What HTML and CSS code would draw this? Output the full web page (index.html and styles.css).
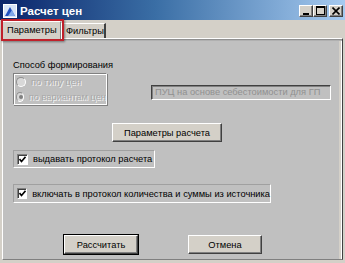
FILE: index.html
```html
<!DOCTYPE html>
<html lang="ru">
  <head>
    <meta charset="UTF-8" />
    <title>Расчет цен</title>
    <link rel="stylesheet" href="styles.css">
  </head>
  <body>
    <div class="window">
      <!-- заголовок окна -->
      <div class="titlebar">
        <svg class="app-icon" width="14" height="14" viewBox="0 0 14 14">
          <rect x="0.5" y="0.5" width="13" height="13" fill="#d8e4f8" stroke="#ffffff" />
          <path d="M2 12 L7 3 L12 12 Z" fill="#2050c0" />
          <path d="M5 12 L9 6 L12 12 Z" fill="#80a8e8" />
        </svg>
        <span class="title">Расчет цен</span>
        <div class="caption-buttons">
          <span class="cap-btn">
            <svg width="8" height="8" viewBox="0 0 8 8"><rect x="1" y="6" width="6" height="2" fill="#000" /></svg>
          </span>
          <span class="cap-btn">
            <svg width="9" height="9" viewBox="0 0 9 9"><rect x="0.5" y="0.5" width="8" height="8" fill="none" stroke="#000" /><rect x="0" y="0" width="9" height="2" fill="#000" /></svg>
          </span>
          <span class="cap-btn close">
            <svg width="8" height="8" viewBox="0 0 8 8"><path d="M0.5 0.5 L7.5 7.5 M7.5 0.5 L0.5 7.5" stroke="#000" stroke-width="1.6" /></svg>
          </span>
        </div>
      </div>

      <!-- вкладки -->
      <div class="tabs">
        <div class="tab active">Параметры</div>
        <div class="tab">Фильтры</div>
      </div>

      <div class="panel">
        <div class="group-title">Способ формирования</div>
        <div class="method-row">
          <div class="radio-group">
            <div class="radio disabled"><span class="radio-dot"></span>по типу цен</div>
            <div class="radio disabled checked"><span class="radio-dot"></span>по вариантам цен</div>
          </div>
          <div class="text-field">ПУЦ на основе себестоимости для ГП</div>
        </div>

        <div class="center-row">
          <button class="btn wide">Параметры расчета</button>
        </div>

        <div class="check-frame first">
          <span class="check">
            <svg width="7" height="7" viewBox="0 0 7 7"><path d="M0.5 3 L2.5 5.5 L6.5 0.8" fill="none" stroke="#000" stroke-width="1.6" /></svg>
          </span>
          выдавать протокол расчета
        </div>
        <div class="check-frame second">
          <span class="check">
            <svg width="7" height="7" viewBox="0 0 7 7"><path d="M0.5 3 L2.5 5.5 L6.5 0.8" fill="none" stroke="#000" stroke-width="1.6" /></svg>
          </span>
          включать в протокол количества и суммы из источника
        </div>

        <div class="footer">
          <button class="btn default">Рассчитать</button>
          <button class="btn">Отмена</button>
        </div>
      </div>

      <!-- красная рамка вокруг вкладки -->
      <div class="highlight"></div>
    </div>
  </body>
</html>
```

FILE: styles.css
```css
* {
  margin: 0;
  padding: 0;
  box-sizing: border-box;
}
body {
  width: 345px;
  height: 263px;
  overflow: hidden;
  background: #d4d0c8;
  font-family: "Liberation Sans", Arial, sans-serif;
  font-size: 9.3px;
  color: #000;
}
.window {
  position: relative;
  width: 345px;
  height: 263px;
  background: #d4d0c8;
}

.titlebar {
  display: flex;
  align-items: center;
  height: 20px;
  padding: 1px 2px 0 3px;
  background: linear-gradient(to right, #0a246a 0%, #3a6ea5 45%, #a6caf0 100%);
}
.app-icon {
  flex: none;
}
.title {
  margin-left: 3px;
  color: #fff;
  font-weight: bold;
  font-size: 11.5px;
}
.caption-buttons {
  display: flex;
  margin-left: auto;
}
.cap-btn {
  display: flex;
  align-items: center;
  justify-content: center;
  width: 14px;
  height: 12px;
  background: #d4d0c8;
  border: 1px solid;
  border-color: #fff #404040 #404040 #fff;
  box-shadow: inset -1px -1px 0 #808080;
}
.cap-btn.close {
  margin-left: 2px;
}

.tabs {
  display: flex;
  align-items: flex-end;
  height: 18px;
  padding-left: 2px;
}
.tab {
  width: 45px;
  height: 15px;
  padding-left: 4px;
  line-height: 14px;
  border-top: 1px solid #fff;
  border-left: 1px solid #fff;
  border-right: 2px solid #404040;
}
.tab.active {
  position: relative;
  z-index: 1;
  width: 59px;
  height: 19px;
  margin-bottom: -2px;
  padding-left: 4px;
  line-height: 16px;
  background: #d4d0c8;
  border-right: 1px solid #808080;
}

.panel {
  height: 222px;
  margin: 0 2px 0 2px;
  padding: 0 10px;
  background: #c0c0c0;
  border: 1px solid;
  border-color: #fff #404040 #808080 #fff;
  box-shadow: inset 0 1px 0 #909090, inset 0 2px 0 #b0b0b0, inset -1px 0 0 #fff, inset -3px 0 0 #d4d0c8;
}
.group-title {
  padding-top: 20px;
  line-height: 13px;
}
.method-row {
  display: flex;
  align-items: flex-end;
  margin-top: 1px;
}
.radio-group {
  width: 94px;
  height: 32px;
  padding: 0 0 0 2px;
  border: 1px solid;
  border-color: #808080 #fff #fff #808080;
  box-shadow: inset 1px 1px 0 #fff, 1px 1px 0 #808080;
}
.radio {
  display: flex;
  align-items: center;
  height: 15px;
  white-space: nowrap;
}
.radio.disabled {
  color: #a8a8a8;
  text-shadow: 1px 1px 0 #f4f4f4;
}
.radio-dot {
  position: relative;
  width: 10px;
  height: 10px;
  margin-right: 5px;
  border-radius: 50%;
  background: #d8d8d8;
  border: 1px solid;
  border-color: #909090 #fff #fff #909090;
}
.radio.checked .radio-dot::after {
  content: "";
  position: absolute;
  left: 2px;
  top: 2px;
  width: 4px;
  height: 4px;
  border-radius: 50%;
  background: #808080;
}
.text-field {
  width: 180px;
  height: 15px;
  margin: 0 0 5px 44px;
  padding-left: 3px;
  line-height: 12px;
  color: #909090;
  white-space: nowrap;
  overflow: hidden;
  background: #c0c0c0;
  border: 1px solid;
  border-color: #404040 #fff #fff #404040;
  box-shadow: inset 1px 1px 0 #808080;
}

.center-row {
  display: flex;
  padding-left: 99px;
  margin-top: 18px;
}
.btn {
  height: 19px;
  font-family: "Liberation Sans", Arial, sans-serif;
  font-size: 9.3px;
  color: #000;
  background: #d4d0c8;
  border: 1px solid;
  border-color: #fff #404040 #404040 #fff;
  box-shadow: inset -1px -1px 0 #808080;
}
.btn.wide {
  width: 110px;
}
.btn.default {
  outline: 1px solid #000;
}

.check-frame {
  display: flex;
  align-items: center;
  height: 18px;
  padding-left: 3px;
  white-space: nowrap;
  border: 1px solid;
  border-color: #a0a0a0 #fff #fff #a0a0a0;
}
.check-frame.first {
  width: 142px;
  margin-top: 8px;
}
.check-frame.second {
  width: 258px;
  height: 19px;
  margin-top: 16px;
}
.check {
  display: flex;
  align-items: center;
  justify-content: center;
  width: 11px;
  height: 11px;
  margin-right: 5px;
  background: #fff;
  border: 1px solid;
  border-color: #808080 #fff #fff #808080;
  box-shadow: inset 1px 1px 0 #404040;
}

.footer {
  display: flex;
  gap: 50px;
  padding-left: 51px;
  margin-top: 32px;
}
.footer .btn {
  width: 74px;
}

.highlight {
  position: absolute;
  left: 1px;
  top: 19px;
  width: 63px;
  height: 22px;
  border: 2px solid #c0202a;
  box-shadow: 1px 1px 2px rgba(0, 0, 0, 0.4);
  z-index: 2;
}
```
